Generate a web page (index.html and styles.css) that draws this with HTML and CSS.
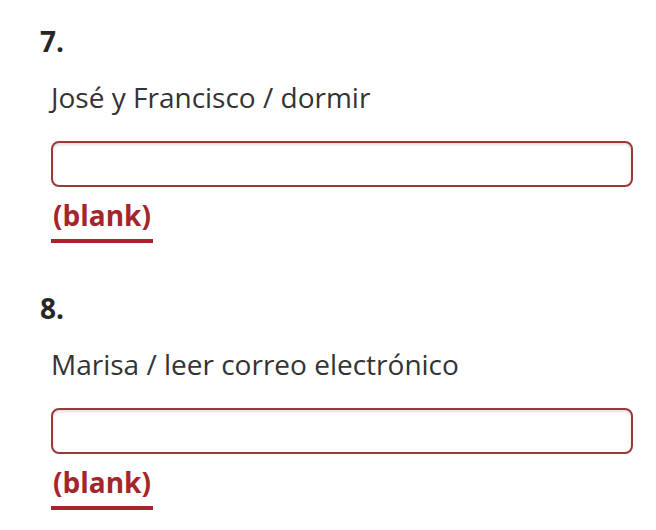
FILE: index.html
```html
<!DOCTYPE html>
<html>
<head>
<meta charset="utf-8">
<link rel="stylesheet" href="styles.css">
</head>
<body>
<div class="list">
  <div class="item">
    <div class="num">7.</div>
    <div class="body">
      <div class="prompt">José y Francisco / dormir</div>
      <input class="answer" type="text">
      <div class="blank">(blank)</div>
    </div>
  </div>
  <div class="item">
    <div class="num">8.</div>
    <div class="body">
      <div class="prompt">Marisa / leer correo electrónico</div>
      <input class="answer" type="text">
      <div class="blank">(blank)</div>
    </div>
  </div>
</div>
</body>
</html>
```
FILE: styles.css
```css
html, body {
  margin: 0;
  background: #fff;
}
body {
  font-family: "Open Sans", sans-serif;
  color: #333;
}
.list {
  padding: 22px 24px 0 40px;
  display: flex;
  flex-direction: column;
  gap: 46px;
}
.item {
  display: flex;
  flex-direction: column;
}
.num {
  font-weight: 700;
  font-size: 28px;
  line-height: 38px;
  color: #262626;
}
.body {
  padding-left: 11px;
}
.prompt {
  font-size: 28px;
  line-height: 38px;
  margin-top: 18px;
  color: #333;
}
.answer {
  display: block;
  box-sizing: border-box;
  width: 582px;
  height: 46px;
  margin-top: 25px;
  border: 2px solid #9b383c;
  border-radius: 8px;
  background: #fff;
  box-shadow: inset 0 2px 3px rgba(0,0,0,0.12);
  outline: none;
  font: inherit;
}
.blank {
  display: inline-block;
  margin-top: 9px;
  padding: 0 2px 5px 2px;
  font-weight: 700;
  font-size: 28px;
  line-height: 38px;
  color: #a4262c;
  border-bottom: 4px solid #a4262c;
}
```
